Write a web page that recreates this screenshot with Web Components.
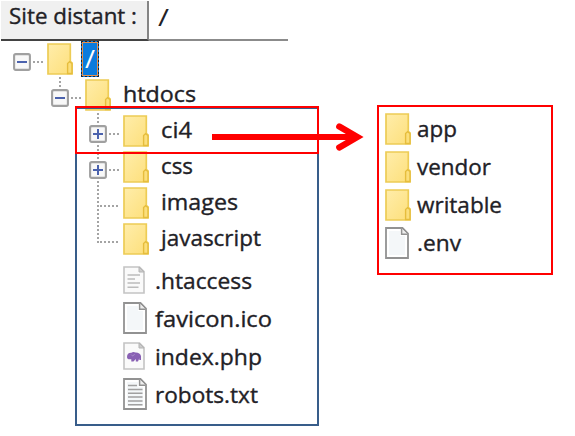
<!DOCTYPE html>
<html lang="fr"><head><meta charset="utf-8"><title>Site distant</title>
<style>body{margin:0;background:#fff;overflow:hidden}</style></head><body>
<site-browser></site-browser>
<script>
const folder=`<svg width="26" height="32" viewBox="0 0 26 32"><defs><linearGradient id="g" x2="1" y2="1"><stop stop-color="#ffedaa"/><stop offset="1" stop-color="#fddf7a"/></linearGradient></defs><path d="M1 1H23.3V18.5L25 20V31H1Z" fill="url(#g)" stroke="#edcc55" stroke-width="1.7"/><path d="M20.6 30.5V20.5L22.6 18.6L25 20.5V30.5Z" fill="#fbdf7c" stroke="#e6bd3c" stroke-width="1.4"/></svg>`;
const big=(inner)=>`<svg width="26" height="32" viewBox="0 0 26 32"><path d="M1 1H17.5L23 6.5V31H1Z" fill="#fff" stroke="#929292" stroke-width="1.8"/><path d="M4 4H15V9H20V28H4Z" fill="#f4f7f9"/><path d="M16.6 1.5V7.3H22.5" fill="#eee" stroke="#929292" stroke-width="1.5"/>${inner}</svg>`;
const small=(inner)=>`<svg width="26" height="28" viewBox="0 0 26 28"><path d="M1 1H16.5L21 5.5V27H1Z" fill="#fafafa" stroke="#c4c4c4" stroke-width="1.6"/><path d="M16 1V6H21Z" fill="#ccc" stroke="#b4b4b4"/>${inner}</svg>`;
const icons={folder,file:big(''),
lines:big('<path d="M5 7.5H14M5 11.5H19.5M5 15.3H19.5M5 19.1H19.5M5 22.9H19.5M5 26.7H19.5" stroke="#a0a0a0" stroke-width="1.5"/>'),
faint:small('<path d="M4.5 9H17M4.5 13H12M4.5 17H17M4.5 21.3H15.5" stroke="#bcbcbc" stroke-width="1.5"/>'),
php:small('<path d="M4 15Q4 10.5 8.5 10.7Q10 9.6 12.5 10.5Q17 10.4 18 14V18H16.3V16.3L15 19.5H12.8V17L10.5 19.5H8.3V17.2Q4 18 4 15Z" fill="#8961b4"/><path d="M8 12.5Q10 15.5 11.5 12" stroke="#a98bc9" fill="none"/>')};

class FitLabel extends HTMLElement{
  constructor(){super();this.attachShadow({mode:'open'}).innerHTML=`<style>:host{display:block;white-space:nowrap;font:var(--size,21.5px)/28px "Open Sans","Noto Sans",sans-serif;color:#222126;-webkit-text-stroke:var(--stroke,.35px) currentColor}span{display:inline-block;transform-origin:0 50%}</style><span><slot></slot></span>`}
  connectedCallback(){
    const s=this.shadowRoot.querySelector('span'),w=+this.getAttribute('width');
    if(w)s.style.transform=`scaleX(${w/s.getBoundingClientRect().width})`;
  }
}
class TreeToggle extends HTMLElement{
  connectedCallback(){
    if(this.shadowRoot)return;
    this.attachShadow({mode:'open'}).innerHTML=`<style>:host{display:block;width:18px;height:18px}svg{display:block}</style><svg width="18" height="18"><rect x="1.1" y="1.1" width="15.8" height="15.8" rx="1.6" fill="#f8f8f8" stroke="#a0a0a0" stroke-width="2.1"/><path d="M4 9H14${this.getAttribute('kind')==='plus'?'M9 4V14':''}" stroke="#4b62ad" stroke-width="2"/></svg>`;
  }
}
class TreeRow extends HTMLElement{
  constructor(){
    super();const a=n=>this.getAttribute(n)||'';
    this.attachShadow({mode:'open'}).innerHTML=`<style>
    :host{display:grid;box-sizing:border-box;height:var(--row,36px);grid-template-columns:var(--lead,0) 26px auto;align-items:start;margin-left:var(--x,0)}
    .lead{display:grid;grid-template-columns:18px 14px;padding-top:12px;height:18px;align-items:center}
    .dots{height:2px;margin-left:2px;width:11px;background:repeating-linear-gradient(90deg,#a4a4a4 0 2px,transparent 2px 4px)}
    .wide{grid-column:1/3;margin-left:11px;width:19px}
    .icon{display:flex;align-items:center;height:var(--row,36px)}
    svg{display:block}
    .text{padding-left:var(--gap,12px);padding-top:var(--drop,3px)}
    </style><div class="lead">${a('toggle')?`<tree-toggle kind="${a('toggle')}"></tree-toggle><i class="dots"></i>`:a('branch')?'<i class="dots wide"></i>':''}</div><div class="icon">${icons[a('icon')]}</div><div class="text"><slot></slot></div>`}
}
class SiteHeader extends HTMLElement{
  constructor(){super();this.attachShadow({mode:'open'}).innerHTML=`<style>
  :host{display:grid;grid-template-columns:149px 139px;height:41px;box-sizing:border-box}
  .name{box-sizing:border-box;margin-left:1px;padding:1px 0 0 8px;margin-top:1px;background:#f0f0f0;border-right:2px solid #858585;border-bottom:2.5px solid #424242}
  .path{box-sizing:border-box;padding:2px 0 0 9px;margin-top:1px;border-bottom:2px solid #8b8b8b;--size:24px;--stroke:0}
  </style><div class="name"><fit-label width="128">Site distant :</fit-label></div><div class="path"><fit-label width="11">/</fit-label></div>`}
}
class RedArrow extends HTMLElement{
  constructor(){super();this.attachShadow({mode:'open'}).innerHTML=`<style>:host{display:block}svg{display:block}</style><svg width="155" height="30"><path d="M0 15H145" stroke="#f00" stroke-width="6"/><path d="M127.3 4.6L145.3 15L127.3 25.4" fill="none" stroke="#f00" stroke-width="6.3" stroke-linecap="round" stroke-linejoin="miter"/></svg>`}
}
class SiteBrowser extends HTMLElement{
  constructor(){super();this.attachShadow({mode:'open'}).innerHTML=`<style>
  :host{display:block;position:relative;width:575px;height:436px;background:#fff}
  .tree tree-row{--lead:34px}
  .root{--x:13px;--gap:8px;--drop:0px}.child{--x:51px}.leaf{--x:89px}
  .sel{display:block;box-sizing:border-box;width:18px;height:36px;padding:1px 0 0 2px;background:#0b7bdc;border:2px dotted #1c2530;outline:1px solid #e7924e;outline-offset:-2px;--size:25px;--stroke:0}
  .sel fit-label{color:#fff}
  .files{padding-top:4px}.files tree-row{--row:38px;--x:123px;--gap:6px;--drop:5.5px}
  .mark{position:absolute;box-sizing:border-box}
  .scope{left:75px;top:107px;width:244px;height:319px;border:2px solid #385d8a}
  .pick{left:75px;top:106px;width:244px;height:48px;border:2px solid #f00}
  .detail{left:377px;top:105px;width:176px;height:170px;border:2px solid #f00;background:#fff;padding:3px 0 0 6px}
  .detail tree-row{--row:38px;--gap:6px;--drop:5px}
  red-arrow{position:absolute;left:212px;top:122px}
  .stem{position:absolute;width:2px;background:repeating-linear-gradient(#a4a4a4 0 2px,transparent 2px 4px)}
  </style>
  <site-header></site-header>
  <div class="tree">
  <tree-row class="root" toggle="minus" icon="folder"><span class="sel"><fit-label width="10">/</fit-label></span></tree-row>
  <tree-row class="child" toggle="minus" icon="folder"><fit-label width="73">htdocs</fit-label></tree-row>
  <tree-row class="leaf" toggle="plus" icon="folder"><fit-label width="31">ci4</fit-label></tree-row>
  <tree-row class="leaf" toggle="plus" icon="folder"><fit-label width="32">css</fit-label></tree-row>
  <tree-row class="leaf" branch="1" icon="folder"><fit-label width="77">images</fit-label></tree-row>
  <tree-row class="leaf" branch="1" icon="folder"><fit-label width="100">javascript</fit-label></tree-row>
  </div>
  <div class="files">
  <tree-row icon="faint"><fit-label width="97">.htaccess</fit-label></tree-row>
  <tree-row icon="file"><fit-label width="117">favicon.ico</fit-label></tree-row>
  <tree-row icon="php"><fit-label width="107">index.php</fit-label></tree-row>
  <tree-row icon="lines"><fit-label width="103">robots.txt</fit-label></tree-row>
  </div>
  <i class="stem" style="left:59px;top:77px;height:11px"></i>
  <i class="stem" style="left:97px;top:113px;height:11px"></i>
  <i class="stem" style="left:97px;top:145px;height:15px"></i>
  <i class="stem" style="left:97px;top:181px;height:62px"></i>
  <div class="mark scope"></div><div class="mark pick"></div>
  <div class="mark detail">
  <tree-row icon="folder"><fit-label width="40">app</fit-label></tree-row>
  <tree-row icon="folder"><fit-label width="74">vendor</fit-label></tree-row>
  <tree-row icon="folder"><fit-label width="85">writable</fit-label></tree-row>
  <tree-row icon="file"><fit-label width="44">.env</fit-label></tree-row>
  </div>
  <red-arrow></red-arrow>`}
}
customElements.define('fit-label',FitLabel);
customElements.define('tree-toggle',TreeToggle);
customElements.define('tree-row',TreeRow);
customElements.define('site-header',SiteHeader);
customElements.define('red-arrow',RedArrow);
customElements.define('site-browser',SiteBrowser);
</script></body></html>
